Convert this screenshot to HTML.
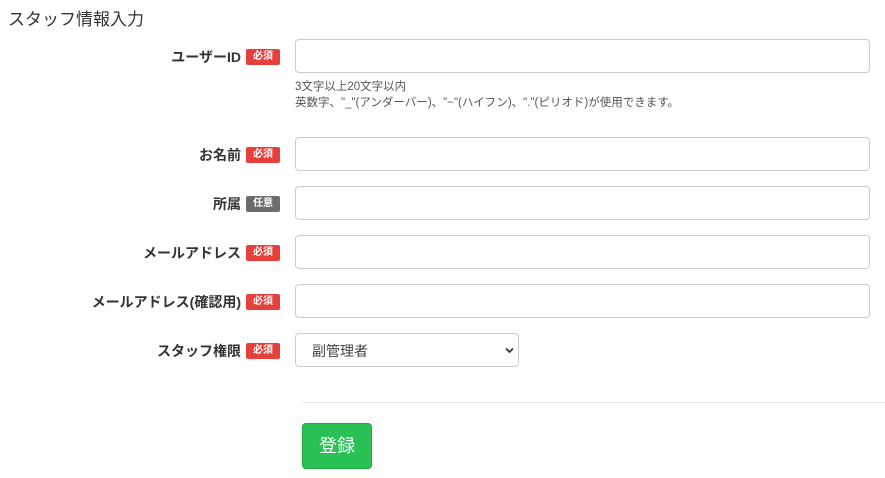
<!DOCTYPE html><html><head><meta charset="utf-8"><style>
body{margin:0;width:885px;height:478px;background:#fff;font-family:"Liberation Sans","Noto Sans CJK JP",sans-serif;color:#333;position:relative;overflow:hidden}
.a{position:absolute}
h1{position:absolute;left:8px;top:5px;margin:0;font-size:17px;font-weight:normal;color:#333}
.lab{position:absolute;right:605px;font-size:14px;font-weight:bold;color:#333;white-space:nowrap;line-height:18px;display:flex;align-items:center}
.b{display:inline-block;margin-left:5px;background:#e5403b;color:#fff;font-size:10px;font-weight:bold;padding:0 4px;height:16px;line-height:16px;border-radius:2px;width:26px;text-align:center}
.b.g{background:#6c6c6c}
.in{position:absolute;left:295px;width:573px;height:32px;border:1px solid #ccc;border-radius:4px}
.help{position:absolute;left:295px;top:79px;font-size:11.5px;color:#555;line-height:16px;white-space:nowrap}
</style></head><body>
<h1>スタッフ情報入力</h1>
<div class="lab" style="top:48px">ユーザーID<span class="b">必須</span></div>
<div class="in" style="top:39px"></div>
<div class="help">3文字以上20文字以内<br>英数字、"_"(アンダーバー)、"−"(ハイフン)、"."(ピリオド)が使用できます。</div>
<div class="lab" style="top:146px">お名前<span class="b">必須</span></div>
<div class="in" style="top:137px"></div>
<div class="lab" style="top:195px">所属<span class="b g">任意</span></div>
<div class="in" style="top:186px"></div>
<div class="lab" style="top:244px">メールアドレス<span class="b">必須</span></div>
<div class="in" style="top:235px"></div>
<div class="lab" style="top:293px">メールアドレス(確認用)<span class="b">必須</span></div>
<div class="in" style="top:284px"></div>
<div class="lab" style="top:342px">スタッフ権限<span class="b">必須</span></div>
<div class="in" style="top:333px;width:222px"><span class="a" style="left:16px;top:7px;font-size:14px;color:#444">副管理者</span><svg class="a" style="left:209px;top:13px" width="9" height="7" viewBox="0 0 9 7"><path d="M1 1.5L4.5 5L8 1.5" stroke="#333" stroke-width="1.8" fill="none"/></svg></div>
<div class="a" style="left:302px;top:402px;width:583px;height:1px;background:#e6e6e6"></div>
<div class="a" style="left:302px;top:423px;width:68px;height:44px;background:#28c153;border:1px solid #1fa845;border-radius:4px;color:#fff;font-size:18px;line-height:44px;text-align:center">登録</div>
</body></html>
